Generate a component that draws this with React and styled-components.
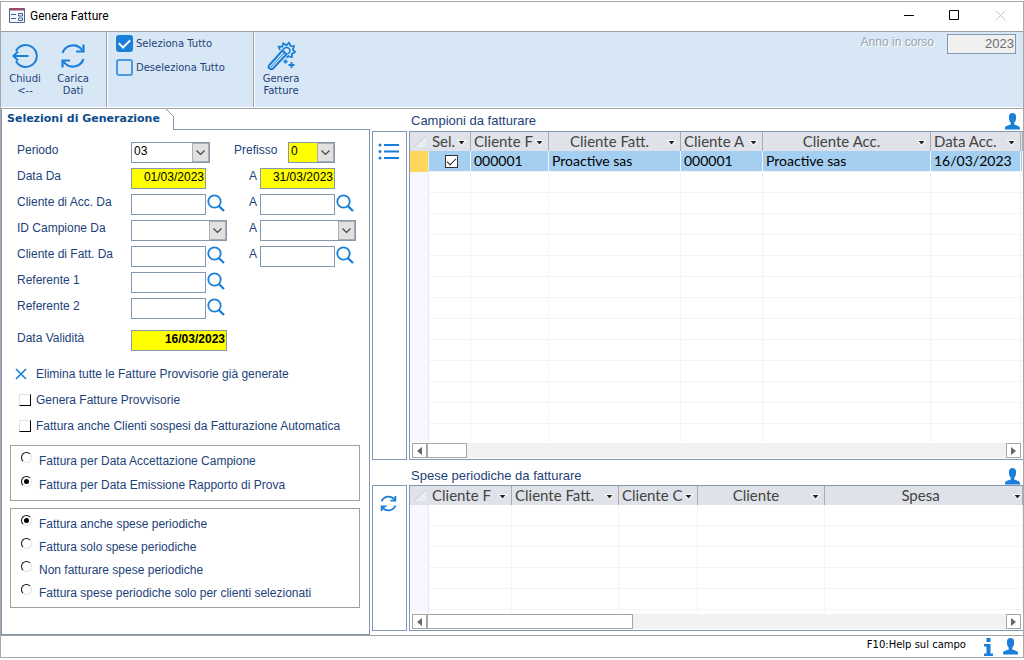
import React from "react";
import styled, { createGlobalStyle } from "styled-components";

const c = {
  navy: "#1d4279",
  blue: "#1a7fd8",
  edge: "#8497b0",
  gray: "#a0a0a0",
  bar: "#d8e7f6",
  yellow: "#ffff00",
};
const sans = `"Liberation Sans", Arial, sans-serif`;
const verdana = `"DejaVu Sans", Verdana, sans-serif`;
const gothic = `Lato, "Century Gothic", sans-serif`;

const Global = createGlobalStyle`
  * { box-sizing: border-box; }
  body { margin: 0; background: #fff; font: 12px/16px ${sans}; color: ${c.navy}; }
  button, input, select { font: inherit; color: inherit; margin: 0; padding: 0; border-radius: 0; }
  button { background: none; border: 0; cursor: pointer; }
  svg { display: block; flex: none; }
`;

const Window = styled.div`
  display: flex;
  flex-direction: column;
  margin: 1px 0 2px;
  min-height: calc(100vh - 3px);
  border: 1px solid #a8a8a8;
`;
const TitleBar = styled.header`
  display: flex;
  align-items: center;
  height: 30px;
  padding: 0 14px 2px 8px;
  gap: 5px;
  border-bottom: 1px solid ${c.gray};
`;
const Title = styled.h1`
  flex: 1;
  margin: 0;
  font: 12px/16px Roboto, "Segoe UI", sans-serif;
  color: #000;
`;
const WindowButton = styled.button`
  display: grid;
  place-items: center;
  width: 18px;
  height: 24px;
  margin-left: 23px;
  color: ${(p) => (p.disabled ? "#c4c4c4" : "#000")};
`;

const Toolbar = styled.div`
  display: flex;
  height: 75px;
  background: ${c.bar};
  font: 10px/12px ${verdana};
`;
const ToolGroup = styled.div`
  display: flex;
  flex-direction: ${(p) => (p.$stack ? "column" : "row")};
  align-items: flex-start;
  width: ${(p) => p.$width};
  padding: ${(p) => p.$pad};
  gap: ${(p) => p.$gap || "0"};
  border-right: ${(p) => (p.$last ? "0" : `1px solid ${c.gray}`)};
  box-shadow: ${(p) => (p.$last ? "none" : "1px 0 #fff")};
  margin-right: 1px;
`;
const ToolButton = styled.button`
  display: flex;
  flex-direction: column;
  align-items: center;
  gap: ${(p) => p.$gap || "4px"};
  width: 48px;
  text-align: center;
`;
const TickLabel = styled.label`
  display: flex;
  align-items: center;
  gap: 3px;
  height: 17px;
  white-space: nowrap;
`;
const Tick = styled.input`
  appearance: none;
  display: grid;
  place-items: center;
  width: 17px;
  height: 17px;
  border: 2px solid #4a98df;
  border-radius: 3px;
  &:checked { background: ${c.blue}; border-color: ${c.blue}; }
  &:checked::after {
    content: "";
    width: 9px;
    height: 5px;
    border: solid #fff;
    border-width: 0 0 2px 2px;
    transform: translateY(-1px) rotate(-45deg);
  }
`;
const YearLabel = styled.label`
  display: flex;
  align-items: flex-start;
  gap: 13px;
  margin-left: auto;
  padding: 2px 7px 0 0;
  font: 12px/16px ${sans};
  color: #9aa2ac;
  text-shadow: 1px 1px #fff;
`;
const YearInput = styled.input`
  width: 69px;
  height: 20px;
  padding: 0 1px 2px;
  border: 1px solid ${c.edge};
  background: #f0f0f0;
  color: #6d6d6d;
  font-size: 13px;
  text-align: right;
`;

const Main = styled.main`
  flex: 1;
  display: flex;
  gap: 2px;
  margin-top: 1px;
  border-top: 1px solid ${c.gray};
`;
const FormPanel = styled.section`
  display: flex;
  flex-direction: column;
  flex: none;
  width: 369px;
  border-left: 1px solid ${c.edge};
`;
const TabStrip = styled.div`
  display: flex;
  height: 21px;
`;
const Tab = styled.button`
  padding: 0 6px 2px 5px;
  font: bold 11px/18px ${verdana};
  color: #0d4b8b;
  white-space: nowrap;
`;
const TabFill = styled.div`
  flex: 1;
  border-bottom: 1px solid ${c.edge};
`;
const FormBody = styled.form`
  flex: 1;
  padding: 12px 9px 12px 8px;
  border: solid ${c.edge};
  border-width: 0 1px 1px 0;
`;
const Fields = styled.div`
  display: grid;
  gap: 5px;
  padding-left: 7px;
`;
const Line = styled.div`
  display: grid;
  grid-template-columns: 114px 118px 11px 1fr;
  height: 21px;
  margin-top: ${(p) => (p.$spaced ? "6px" : "0")};
`;
const WideLine = styled(Line)`
  grid-template-columns: 114px 103px 54px 1fr;
`;
const FieldWrap = styled.div`
  display: flex;
  align-items: flex-start;
  gap: 1px;
`;
const Field = styled.input`
  width: ${(p) => (p.$wide ? "96px" : "75px")};
  height: 21px;
  padding: 0 1px 3px;
  border: 1px solid ${c.edge};
  background: ${(p) => (p.$hot ? c.yellow : "#fff")};
  color: #000;
  text-align: right;
  font-weight: ${(p) => (p.$bold ? "bold" : "normal")};
`;
const SelectBox = styled.div`
  position: relative;
  width: ${(p) => p.$width};
  height: 21px;
  select {
    appearance: none;
    width: 100%;
    height: 21px;
    padding: 0 18px 3px 2px;
    border: 1px solid ${c.edge};
    background: ${(p) => (p.$hot ? c.yellow : "#fff")};
    color: #000;
  }
`;
const DropMark = styled.span`
  position: absolute;
  inset: 1px 1px 1px auto;
  display: grid;
  place-items: center;
  width: 17px;
  border: 1px solid #adadad;
  background: #e1e1e1;
  pointer-events: none;
`;
const Options = styled.div`
  padding: 10px 0 6px 4px;
`;
const OptionLine = styled.label`
  display: flex;
  align-items: center;
  height: 26px;
  gap: 5px;
  padding-left: 5px;
  white-space: nowrap;
`;
const ClearButton = styled.button`
  display: flex;
  align-items: center;
  height: 26px;
  gap: 7px;
`;
const ClassicCheck = styled.input`
  appearance: none;
  width: 12px;
  height: 12px;
  border: 1px solid;
  border-color: #e3e3e3 #000 #000 #e3e3e3;
`;
const Group = styled.fieldset`
  display: flex;
  flex-direction: column;
  gap: ${(p) => p.$gap};
  margin: 0 0 7px;
  padding: ${(p) => p.$pad};
  border: 1px solid ${c.gray};
`;
const RadioLine = styled.label`
  display: flex;
  align-items: flex-start;
  gap: 7px;
  height: 16px;
  white-space: nowrap;
`;
const ClassicRadio = styled.input`
  appearance: none;
  display: grid;
  place-items: center;
  width: 11px;
  height: 11px;
  border: 1px solid;
  border-color: #111 #e3e3e3 #e3e3e3 #111;
  border-radius: 50%;
  &:checked::after {
    content: "";
    width: 5px;
    height: 5px;
    border-radius: 50%;
    background: #000;
  }
`;
const RadioText = styled.span`
  padding-top: 1px;
`;

const Lists = styled.section`
  flex: 1;
  min-width: 0;
  display: grid;
  grid-template-columns: 35px minmax(0, 1fr);
  grid-template-rows: 22px 1fr 25px 146px;
  column-gap: 2px;
  padding-bottom: 4px;
`;
const ListHead = styled.div`
  grid-column: 2;
  display: flex;
  align-items: center;
  justify-content: space-between;
  padding: ${(p) => (p.$low ? "7px 3px 0 2px" : "2px 3px 0 2px")};
`;
const ListTitle = styled.h2`
  margin: 0;
  font: 13px/16px ${sans};
`;
const SideBar = styled.div`
  display: flex;
  justify-content: center;
  align-items: flex-start;
  padding: ${(p) => p.$top} 3px 0 0;
  border: 1px solid ${c.edge};
`;
const Sheet = styled.div`
  display: flex;
  flex-direction: column;
  min-height: 0;
  border: solid ${c.edge};
  border-width: 1px 0 1px 1px;
`;
const SheetView = styled.div`
  flex: 1 1 0;
  min-height: 0;
  overflow: hidden;
`;
const Table = styled.table`
  width: 100%;
  table-layout: fixed;
  border-collapse: separate;
  border-spacing: 0;
  font: 14px/18px ${gothic};
`;
const Th = styled.th`
  height: 19px;
  padding: 0;
  border-right: 1px solid ${(p) => (p.$plain ? "#dfe2e8" : "#a9adb3")};
  background: #dfe2e8;
  color: #444;
  font-weight: normal;
`;
const ThInner = styled.div`
  display: flex;
  align-items: center;
  height: 19px;
  padding: 0 ${(p) => (p.$flush ? "0" : "4px")} 2px 3px;
`;
const ThText = styled.span`
  flex: 1;
  overflow: hidden;
  white-space: nowrap;
  font-size: 15px;
  text-align: ${(p) => p.$align || "left"};
`;
const CaretWrap = styled.span`
  padding-top: 4px;
`;
const Corner = styled.span`
  display: block;
  padding-left: 4px;
`;
const Td = styled.td`
  height: 21px;
  padding: 0 0 1px 3px;
  overflow: hidden;
  white-space: nowrap;
  color: #000;
  border: solid #f2f4f8;
  border-width: 0 1px 1px 0;
  background: ${(p) => (p.$selected ? "#a4cff1" : "#fff")};
`;
const Marker = styled.td`
  height: 21px;
  padding: 0;
  border-right: 1px solid #e6e9f2;
  background: ${(p) => (p.$current ? "#ffd65c" : "#f7f7ff")};
`;
const RowCheck = styled.input`
  && { margin: 1px auto 0; }
  appearance: none;
  display: grid;
  place-items: center;
  width: 13px;
  height: 13px;
  border: 1px solid #333;
  background: #fff;
  &:checked::after {
    content: "";
    width: 8px;
    height: 4px;
    border: solid #222;
    border-width: 0 0 1px 1px;
    transform: translateY(-1px) rotate(-45deg);
  }
`;
const ScrollBar = styled.div`
  display: flex;
  height: 15px;
  margin: 1px 2px 1px 2px;
  background: #f2f2f2;
`;
const ScrollButton = styled.button`
  display: grid;
  place-items: center;
  width: 15px;
  border: 1px solid #a6a6a6;
  background: #fff;
`;
const Thumb = styled.div`
  width: ${(p) => p.$width};
  margin-right: auto;
  border: 1px solid #a6a6a6;
  background: #fff;
`;
const Footer = styled.footer`
  display: flex;
  align-items: center;
  justify-content: flex-end;
  gap: 10px;
  height: 22px;
  padding-right: 5px;
  border-top: 1px solid ${c.gray};
  font: 10px/14px ${verdana};
  color: #000;
`;
const HelpText = styled.span`
  padding: 0 8px 3px 0;
`;
const IconButton = styled.button`
  display: grid;
  place-items: center;
`;

const Svg = ({ w, h = w, box, children, ...rest }) => (
  <svg width={w} height={h} viewBox={box || `0 0 ${w} ${h}`} fill="none" stroke={c.blue} aria-hidden="true" {...rest}>
    {children}
  </svg>
);
const Person = () => (
  <Svg w={15} h={17} fill={c.blue} stroke="none">
    <path d="M7.500 0C9.800 0 11 1.300 11 3.200V5.500C11 7.300 10.300 8.600 9.300 9.500V11.600C10.500 12.400 15 12.700 15 15V16.500H0V15C0 12.700 4.500 12.400 5.700 11.600V9.500C4.700 8.600 4 7.300 4 5.500V3.200C4 1.300 5.200 0 7.500 0Z" />
  </Svg>
);
const Lens = () => (
  <IconButton type="button" aria-label="Cerca">
    <Svg w={18} strokeWidth="1.8">
      <circle cx="7.500" cy="7.500" r="6.200" />
      <path d="M11.800 12L17 17" strokeWidth="2.400" />
    </Svg>
  </IconButton>
);
const Refresh = ({ size, weight = "2.2" }) => (
  <Svg w={size} box="0 0 26 26" strokeWidth={weight}>
    <path d="M2.500 9.800A11.300 11.300 0 0 1 22.500 7.500M23.500 16.200A11.300 11.300 0 0 1 3.500 18.500" />
    <path d="M23.500 1.500V8.500H16M2.500 24.500V17.500H10" />
  </Svg>
);
const Wand = () => (
  <Svg w={30} strokeWidth="2">
    <path d="M3 24.500L16.500 9.500L20.500 13.200L6.500 28Q4.500 28.500 3 27Q2 26 3 24.500Z" />
    <path d="M5 26L18.500 11.500" strokeWidth="1" />
    <path d="M14 9L12.700 5.700L16.200 5.700L17.300 2.300L20.300 4.300L23 1.800L24.500 5L28 5.200L26.800 8.500L29 11L26 12.800L25.800 16L22.500 15.200L20.500 16.500" strokeWidth="1.800" />
    <path d="M17 8.500Q18.500 6.300 21 6.500Q24 7 24 10Q23.800 12.300 21.500 13" strokeWidth="1.600" />
    <path d="M25.500 21V27M22.500 24H28.500M19.500 18.500V22.500M17.500 20.500H21.500" strokeWidth="1.800" />
  </Svg>
);
const Caret = () => (
  <CaretWrap>
    <Svg w={9} h={6} stroke="none">
      <path d="M0 0H9V1L4.500 6L0 1Z" fill="#fff" />
      <path d="M1.500 1H7.500L4.500 4.500Z" fill="#222" />
    </Svg>
  </CaretWrap>
);

function Combo({ width, hot, value = "", id }) {
  return (
    <SelectBox $width={width} $hot={hot}>
      <select id={id} defaultValue={value}>
        <option value={value}>{value}</option>
      </select>
      <DropMark>
        <Svg w={9} h={6} stroke="#444" strokeWidth="1.2"><path d="M0.500 0.500L4.500 4.500L8.500 0.500" /></Svg>
      </DropMark>
    </SelectBox>
  );
}

function Range({ id, label, from = "", to = "", lens, combo, single, hot }) {
  const cell = (fieldId, value) => (
    <FieldWrap>
      {combo ? <Combo id={fieldId} width="96px" /> : <Field id={fieldId} $hot={hot} defaultValue={value} />}
      {lens && <Lens />}
    </FieldWrap>
  );
  return (
    <Line>
      <label htmlFor={`${id}-da`}>{label}</label>
      {cell(`${id}-da`, from)}
      {!single && <label htmlFor={`${id}-a`}>A</label>}
      {!single && cell(`${id}-a`, to)}
    </Line>
  );
}

function DataSheet({ columns, rows, blanks, thumb, name }) {
  return (
    <Sheet>
      <SheetView>
        <Table aria-label={name}>
          <colgroup>
            <col width="19" />
            {columns.map((col, i) => <col key={i} width={col.width} />)}
          </colgroup>
          <thead>
            <tr>
              <Th $plain>
                <Corner>
                  <Svg w={12} h={12} stroke="none">
                    <path d="M12 0V11H0Z" fill="#e9eef5" /><path d="M0 11L12 0" stroke="#c4ccd8" />
                  </Svg>
                </Corner>
              </Th>
              {columns.map((col, i) => (
                <Th key={i} scope="col">
                  {col.title && (
                    <ThInner $flush={col.flush}><ThText $align={col.align}>{col.title}</ThText><Caret /></ThInner>
                  )}
                </Th>
              ))}
            </tr>
          </thead>
          <tbody>
            {rows.map((row, r) => (
              <tr key={r}>
                <Marker $current />
                {row.map((v, i) => (
                  <Td key={i} $selected>
                    {v === true ? <RowCheck type="checkbox" defaultChecked aria-label="Sel." /> : v}
                  </Td>
                ))}
              </tr>
            ))}
            {Array.from({ length: blanks }, (_, r) => (
              <tr key={`b${r}`}>
                <Marker />
                {columns.map((_, i) => <Td key={i} />)}
              </tr>
            ))}
          </tbody>
        </Table>
      </SheetView>
      <ScrollBar>
        <ScrollButton aria-label="Scorri a sinistra"><Svg w={5} h={8} stroke="none"><path d="M5 0V8L0 4Z" fill="#666" /></Svg></ScrollButton>
        <Thumb $width={thumb} />
        <ScrollButton aria-label="Scorri a destra"><Svg w={5} h={8} stroke="none"><path d="M0 0V8L5 4Z" fill="#666" /></Svg></ScrollButton>
      </ScrollBar>
    </Sheet>
  );
}

const sampleColumns = [
  { title: "Sel.", width: 42 },
  { title: "Cliente F", width: 78 },
  { title: "Cliente Fatt.", width: 132, align: "center" },
  { title: "Cliente A", width: 82 },
  { title: "Cliente Acc.", align: "center" },
  { title: "Data Acc.", width: 90 },
  { title: "", width: 2 },
];
const sampleRows = [[true, "000001", "Proactive sas", "000001", "Proactive sas", "16/03/2023", ""]];
const expenseColumns = [
  { title: "Cliente F", width: 83 },
  { title: "Cliente Fatt.", width: 107 },
  { title: "Cliente C", width: 79 },
  { title: "Cliente", width: 127, align: "center" },
  { title: "Spesa", align: "center", flush: true },
];

const RadioGroup = ({ name, options, checked, ...rest }) => (
  <Group {...rest}>
    {options.map((text, i) => (
      <RadioLine key={text}>
        <ClassicRadio type="radio" name={name} defaultChecked={i === checked} />
        <RadioText>{text}</RadioText>
      </RadioLine>
    ))}
  </Group>
);

export default function App() {
  return (
    <>
      <Global />
      <Window>
        <TitleBar>
          <Svg w={16} h={15}>
            <path d="M0.500 0.500H15.500V14.500H0.500Z" fill="#f4f7fc" stroke="#4f6696" />
            <path d="M1 1.500H15" stroke="#b0455c" strokeWidth="2" />
            <path d="M2 6.500H7M2 10.500H7" stroke="#3f5f93" />
            <path d="M9.500 5.500H13.500V8H9.500ZM9.500 10H13.500V12.500H9.500Z" stroke="#3f5f93" />
          </Svg>
          <Title>Genera Fatture</Title>
          <WindowButton aria-label="Riduci"><Svg w={11} stroke="#000"><path d="M1 5.500H11" /></Svg></WindowButton>
          <WindowButton aria-label="Ingrandisci"><Svg w={11} stroke="#000"><path d="M0.500 0.500H9.500V9.500H0.500Z" /></Svg></WindowButton>
          <WindowButton aria-label="Chiudi" disabled><Svg w={11} stroke="#c4c4c4"><path d="M0.500 0.500L10.500 10.500M10.500 0.500L0.500 10.500" /></Svg></WindowButton>
        </TitleBar>

        <Toolbar>
          <ToolGroup $width="106px" $pad="11px 0 0">
            <ToolButton>
              <Svg w={26} strokeWidth="2">
                <path d="M4 8A11 11 0 1 1 4 18M1.500 13H16.500M6 8.500L1.500 13L6 17.500" />
              </Svg>
              <span>Chiudi<br />&lt;--</span>
            </ToolButton>
            <ToolButton>
              <Refresh size={26} />
              <span>Carica<br />Dati</span>
            </ToolButton>
          </ToolGroup>
          <ToolGroup $stack $width="146px" $pad="3px 0 0 8px" $gap="7px">
            <TickLabel><Tick type="checkbox" defaultChecked />Seleziona Tutto</TickLabel>
            <TickLabel><Tick type="checkbox" />Deseleziona Tutto</TickLabel>
          </ToolGroup>
          <ToolGroup $last $width="54px" $pad="9px 0 0 2px">
            <ToolButton $gap="2px"><Wand /><span>Genera Fatture</span></ToolButton>
          </ToolGroup>
          <YearLabel>Anno in corso<YearInput readOnly value="2023" /></YearLabel>
        </Toolbar>

        <Main>
          <FormPanel>
            <TabStrip role="tablist">
              <Tab role="tab" aria-selected="true">Selezioni di Generazione</Tab>
              <Svg w={8} h={21} stroke={c.edge}><path d="M0 0L7.500 7.500V21" /></Svg>
              <TabFill />
            </TabStrip>
            <FormBody onSubmit={(e) => e.preventDefault()}>
              <Fields>
                <WideLine>
                  <label htmlFor="periodo">Periodo</label>
                  <Combo id="periodo" width="79px" value="03" />
                  <label htmlFor="prefisso">Prefisso</label>
                  <Combo id="prefisso" width="47px" value="0" hot />
                </WideLine>
                <Range id="data" label="Data Da" from="01/03/2023" to="31/03/2023" hot />
                <Range id="acc" label="Cliente di Acc. Da" lens />
                <Range id="campione" label="ID Campione Da" combo />
                <Range id="fatt" label="Cliente di Fatt. Da" lens />
                <Range id="ref1" label="Referente 1" lens single />
                <Range id="ref2" label="Referente 2" lens single />
                <Line $spaced>
                  <label htmlFor="validita">Data Validità</label>
                  <Field id="validita" $wide $hot $bold defaultValue="16/03/2023" />
                </Line>
              </Fields>
              <Options>
                <ClearButton type="button">
                  <Svg w={15} h={12} strokeWidth="1.6"><path d="M2 1L12 11M12 1L2 11" /></Svg>
                  Elimina tutte le Fatture Provvisorie già generate
                </ClearButton>
                <OptionLine><ClassicCheck type="checkbox" />Genera Fatture Provvisorie</OptionLine>
                <OptionLine><ClassicCheck type="checkbox" />Fattura anche Clienti sospesi da Fatturazione Automatica</OptionLine>
              </Options>
              <RadioGroup
                name="data"
                checked={1}
                $gap="8px"
                $pad="6px 10px 8px"
                options={["Fattura per Data Accettazione Campione", "Fattura per Data Emissione Rapporto di Prova"]}
              />
              <RadioGroup
                name="spese"
                checked={0}
                $gap="7px"
                $pad="6px 10px 7px"
                options={[
                  "Fattura anche spese periodiche",
                  "Fattura solo spese periodiche",
                  "Non fatturare spese periodiche",
                  "Fattura spese periodiche solo per clienti selezionati",
                ]}
              />
            </FormBody>
          </FormPanel>

          <Lists>
            <ListHead><ListTitle>Campioni da fatturare</ListTitle><IconButton aria-label="Utente"><Person /></IconButton></ListHead>
            <SideBar $top="11px">
              <IconButton aria-label="Elenco">
                <Svg w={21} h={17} strokeWidth="2">
                  <path d="M6 2H21M6 8.500H21M6 15H21" />
                  <path d="M2 2V2.010M2 8.500V8.510M2 15V15.010" strokeWidth="3" strokeLinecap="round" />
                </Svg>
              </IconButton>
            </SideBar>
            <DataSheet name="Campioni da fatturare" columns={sampleColumns} rows={sampleRows} blanks={13} thumb="40px" />
            <ListHead $low><ListTitle>Spese periodiche da fatturare</ListTitle><IconButton aria-label="Utente"><Person /></IconButton></ListHead>
            <SideBar $top="9px">
              <IconButton aria-label="Aggiorna"><Refresh size={17} weight="2.8" /></IconButton>
            </SideBar>
            <DataSheet name="Spese periodiche da fatturare" columns={expenseColumns} rows={[]} blanks={6} thumb="206px" />
          </Lists>
        </Main>

        <Footer>
          <HelpText>F10:Help sul campo</HelpText>
          <IconButton aria-label="Informazioni">
            <Svg w={9} h={18} fill={c.blue} stroke="none">
              <path d="M2.500 0H6.500V4H2.500ZM0 6H6.500V15.500H9V18H0V15.500H2.500V8.500H0Z" />
            </Svg>
          </IconButton>
          <IconButton aria-label="Utente"><Person /></IconButton>
        </Footer>
      </Window>
    </>
  );
}
